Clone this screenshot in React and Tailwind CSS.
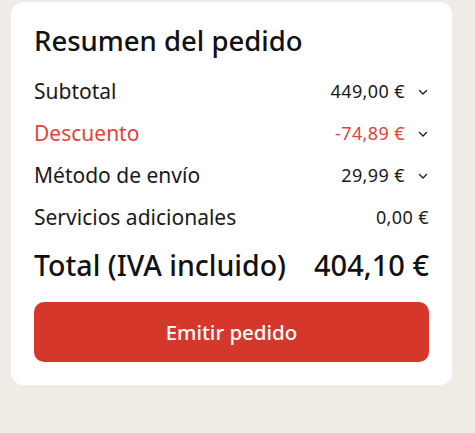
const rows = [
  { label: 'Subtotal', value: '449,00 €', chevron: true },
  { label: 'Descuento', value: '-74,89 €', chevron: true, red: true },
  { label: 'Método de envío', value: '29,99 €', chevron: true },
  { label: 'Servicios adicionales', value: '0,00 €', chevron: false },
]

function Chevron() {
  return (
    <svg width="12" height="12" viewBox="0 0 12 12" fill="none" className="ml-[12px]">
      <path d="M2.5 4.5L6 8L9.5 4.5" stroke="#222" strokeWidth="1.4" strokeLinecap="round" strokeLinejoin="round" />
    </svg>
  )
}

export default function App() {
  return (
    <div
      className="min-h-screen w-full bg-[#efebe5] pt-[2px] pl-[11px]"
      style={{ fontFamily: '"Noto Sans", "Open Sans", sans-serif' }}
    >
      <div className="w-[441px] rounded-[12px] bg-white px-[23px] pt-[19px] pb-[23px]">
        <h2 className="h-[40px] text-[27.5px] leading-[40px] font-medium text-[#111]">
          Resumen del pedido
        </h2>

        <div className="mt-[9.5px]">
          {rows.map((row) => (
            <div key={row.label} className="flex h-[42px] items-center justify-between">
              <span className={`text-[21px] ${row.red ? 'text-[#e0443a]' : 'text-[#1a1a1a]'}`}>
                {row.label}
              </span>
              <span className="flex items-center">
                <span className={`text-[18px] tracking-[0.4px] ${row.red ? 'text-[#e0443a]' : 'text-[#1a1a1a]'}`}>
                  {row.value}
                </span>
                {row.chevron && <Chevron />}
              </span>
            </div>
          ))}
        </div>

        <div className="mt-[5.5px] flex h-[42px] items-center justify-between text-[#111]">
          <span className="text-[28.5px] font-medium">Total (IVA incluido)</span>
          <span className="text-[29px] font-medium">404,10 €</span>
        </div>

        <button className="mt-[16px] flex h-[60px] w-full items-center justify-center rounded-[10px] bg-[#d6372b] text-[20.5px] font-medium text-white">
          Emitir pedido
        </button>
      </div>
    </div>
  )
}
